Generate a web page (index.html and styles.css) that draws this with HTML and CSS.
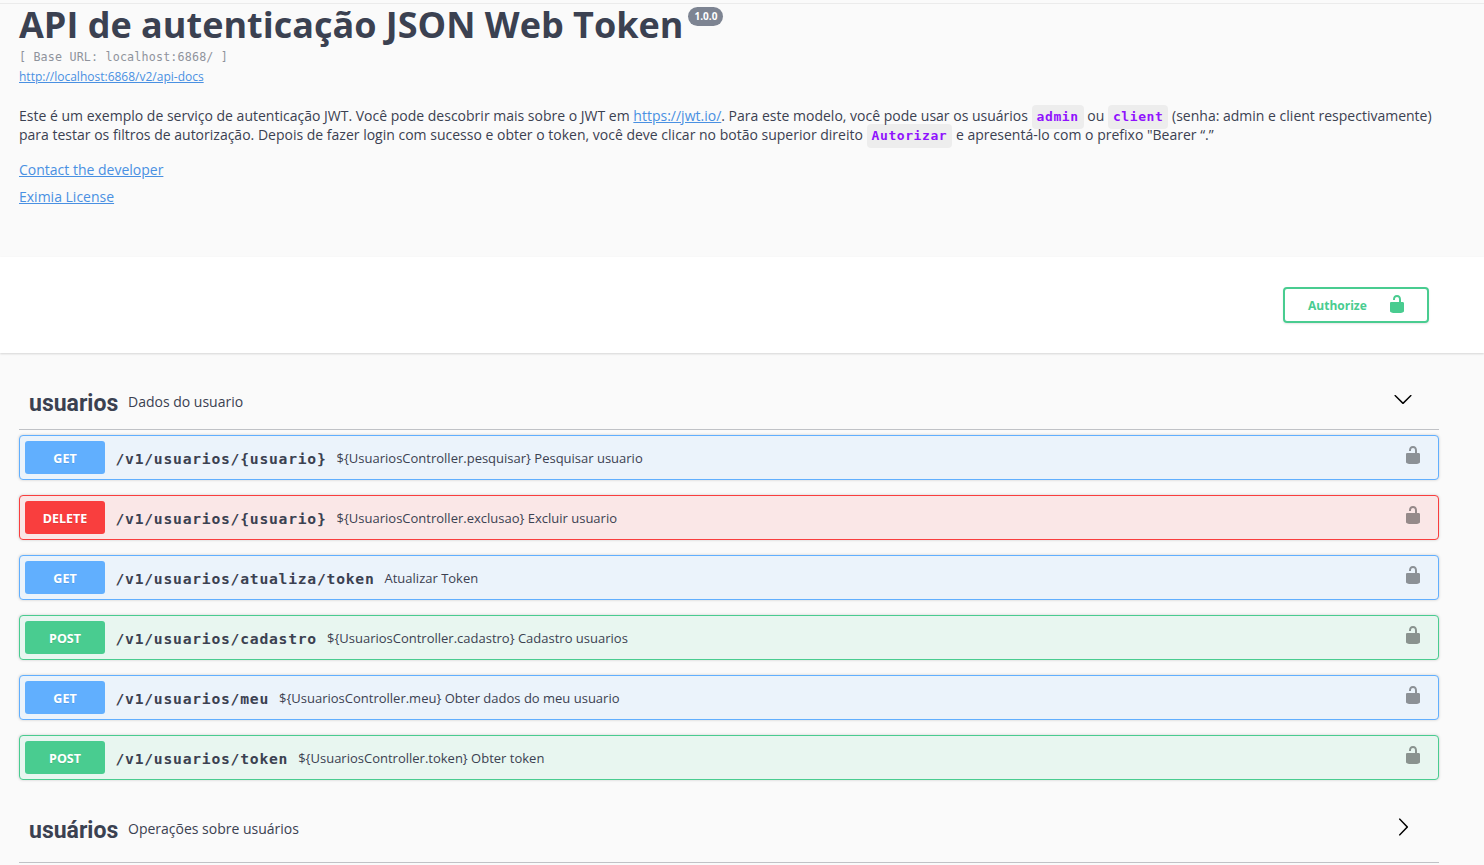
FILE: index.html
```html
<!DOCTYPE html>
<html lang="pt-BR">
<head>
<meta charset="utf-8">
<title>API de autenticação JSON Web Token</title>
<link rel="stylesheet" href="styles.css">
</head>
<body>
<svg class="sprite" width="0" height="0">
<symbol id="unlocked" viewBox="0 0 20 20"><path d="M15.8 8H14V5.6C14 2.703 12.665 1 10 1 7.334 1 6 2.703 6 5.6V6h2v-.801C8 3.754 8.797 3 10 3c1.203 0 2 .754 2 2.199V8H4c-.553 0-1 .646-1 1.199V17c0 .549.428 1.139.951 1.307l1.197.387C5.672 18.861 6.55 19 7.1 19h5.8c.549 0 1.428-.139 1.951-.307l1.196-.387c.524-.167.953-.757.953-1.306V9.199C17 8.646 16.352 8 15.8 8z"/></symbol>
<symbol id="down" viewBox="0 0 20 20"><path d="M17.418 6.109c.272-.268.709-.268.979 0s.271.701 0 .969l-7.908 7.83c-.27.268-.707.268-.979 0l-7.908-7.83c-.27-.268-.27-.701 0-.969.271-.268.709-.268.979 0L10 13.25l7.418-7.141z"/></symbol>
<symbol id="right" viewBox="0 0 20 20"><path d="M13.25 10L6.109 2.58c-.268-.27-.268-.707 0-.979.268-.27.701-.27.969 0l7.83 7.908c.268.271.268.709 0 .979l-7.83 7.908c-.268.271-.701.27-.969 0-.268-.269-.268-.707 0-.979L13.25 10z"/></symbol>
</svg>
<header class="info">
<h1 class="title">API de autenticação JSON Web Token<span class="version">1.0.0</span></h1>
<pre class="base-url">[ Base URL: localhost:6868/ ]</pre>
<a class="docs" href="#">http://localhost:6868/v2/api-docs</a>
<p class="description">Este é um exemplo de serviço de autenticação JWT. Você pode descobrir mais sobre o JWT em <a href="#">https://jwt.io/</a>. Para este modelo, você pode usar os usuários <code>admin</code> ou <code>client</code> (senha: admin e client respectivamente)<br>para testar os filtros de autorização. Depois de fazer login com sucesso e obter o token, você deve clicar no botão superior direito <code>Autorizar</code> e apresentá-lo com o prefixo "Bearer “.”</p>
<a class="contact" href="#">Contact the developer</a>
<a class="contact" href="#">Eximia License</a>
</header>
<div class="scheme">
<button class="authorize"><span>Authorize</span><svg class="icon"><use href="#unlocked"/></svg></button>
</div>
<main class="tags">
<section>
<div class="tag"><h2>usuarios</h2><span class="note">Dados do usuario</span><svg class="icon"><use href="#down"/></svg></div>
<div class="ops">
<div class="op get"><b class="method">GET</b><span class="path">/v1/usuarios/{usuario}</span><span class="summary">${UsuariosController.pesquisar} Pesquisar usuario</span><svg class="icon"><use href="#unlocked"/></svg></div>
<div class="op delete"><b class="method">DELETE</b><span class="path">/v1/usuarios/{usuario}</span><span class="summary">${UsuariosController.exclusao} Excluir usuario</span><svg class="icon"><use href="#unlocked"/></svg></div>
<div class="op get"><b class="method">GET</b><span class="path">/v1/usuarios/atualiza/token</span><span class="summary">Atualizar Token</span><svg class="icon"><use href="#unlocked"/></svg></div>
<div class="op post"><b class="method">POST</b><span class="path">/v1/usuarios/cadastro</span><span class="summary">${UsuariosController.cadastro} Cadastro usuarios</span><svg class="icon"><use href="#unlocked"/></svg></div>
<div class="op get"><b class="method">GET</b><span class="path">/v1/usuarios/meu</span><span class="summary">${UsuariosController.meu} Obter dados do meu usuario</span><svg class="icon"><use href="#unlocked"/></svg></div>
<div class="op post"><b class="method">POST</b><span class="path">/v1/usuarios/token</span><span class="summary">${UsuariosController.token} Obter token</span><svg class="icon"><use href="#unlocked"/></svg></div>
</div>
</section>
<section>
<div class="tag"><h2>usuários</h2><span class="note">Operações sobre usuários</span><svg class="icon"><use href="#right"/></svg></div>
</section>
</main>
</body>
</html>
```

FILE: styles.css
```css
* { box-sizing: border-box; }
body { margin: 0; height: 865px; overflow: hidden; background: #fafafa; color: #3b4151; font-family: "Open Sans", sans-serif; }
a { color: #4990e2; }
.sprite { position: absolute; }
.icon { width: 20px; height: 20px; flex: none; }

.info { height: 257px; padding: 3px 19px 0; background: linear-gradient(#ebebeb, #ebebeb) 0 3px / 100% 1px no-repeat; }
.title { display: flex; align-items: flex-start; margin: 0; height: 45px; font-size: 36px; line-height: 43px; white-space: nowrap; }
.version { margin: 4px 0 0 5px; width: 35px; height: 19px; border-radius: 57px; background: #7d8492; color: #fff; font-size: 10px; line-height: 19px; text-align: center; }
.base-url { margin: 0; height: 19px; font: 11.7px/19px "DejaVu Sans Mono", monospace; letter-spacing: .17px; color: #8f939c; }
.docs { display: block; height: 19px; font-size: 12px; line-height: 19px; }
.description { height: 38px; margin: 20px 0 0; font-size: 14px; line-height: 19px; letter-spacing: .004px; white-space: nowrap; }
.description code { display: inline-block; height: 24px; margin: -4px 0; padding: 0 5px; border-radius: 4px; background: rgba(0,0,0,.05); color: #9012fe; font: bold 13px/24px "DejaVu Sans Mono", monospace; letter-spacing: .58px; }
.contact { display: table; margin-top: 8px; font-size: 14px; line-height: 19px; }
.description + .contact { margin-top: 16px; }

.scheme { display: flex; justify-content: flex-end; height: 96px; padding: 30px 55px; background: #fff; box-shadow: 0 1px 2px rgba(0,0,0,.15); }
.authorize { display: flex; align-items: center; justify-content: space-between; width: 146px; height: 36px; padding: 0 20px 2px 23px; border: 2px solid #49cc90; border-radius: 4px; background: transparent; box-shadow: 0 1px 2px rgba(0,0,0,.1); color: #49cc90; font: bold 12px "Open Sans", sans-serif; }
.authorize span { padding-top: 2px; }
.authorize .icon { fill: #49cc90; }

.tags { padding: 22px 45px 0 19px; }
.tag { display: flex; align-items: center; height: 55px; padding: 0 26px 0 10px; border-bottom: 1px solid rgba(59,65,81,.3); }
.tag .icon { margin: -7px 0 0 auto; }
.tag h2 { width: 89px; margin: 0; padding-top: 3px; font: bold 23px/30px Roboto, sans-serif; }
.note { padding-left: 10px; font-size: 14px; line-height: 20px; }
section + section { margin-top: 22px; }
section + section .tag { height: 61px; padding-bottom: 6px; }
section + section .tag .icon { margin-top: -5px; }
section + section .tag h2 { padding-top: 4px; }

.ops { display: grid; gap: 15px; padding-top: 5px; }
.op { display: flex; align-items: center; height: 45px; padding: 5px 15px 5px 5px; border: 1px solid; border-radius: 4px; box-shadow: 0 0 3px rgba(0,0,0,.19); }
.method { width: 80px; height: 33px; border-radius: 3px; color: #fff; font-size: 12.5px; line-height: 35px; text-align: center; text-shadow: 0 1px 0 rgba(0,0,0,.1); }
.path { padding: 2px 10px 0 10.5px; font: bold 14.7px/20px "DejaVu Sans Mono", monospace; letter-spacing: .75px; }
.summary { padding-top: 1px; font-size: 13px; line-height: 18px; }
.op .icon { margin: -6px 0 0 auto; fill: #000; opacity: .4; }
.get { border-color: #61affe; background: #ebf3fb; }
.get .method { background: #61affe; }
.delete { border-color: #f93e3e; background: #fae7e7; }
.delete .method { background: #f93e3e; }
.post { border-color: #49cc90; background: #e8f6f0; }
.post .method { background: #49cc90; }
```
